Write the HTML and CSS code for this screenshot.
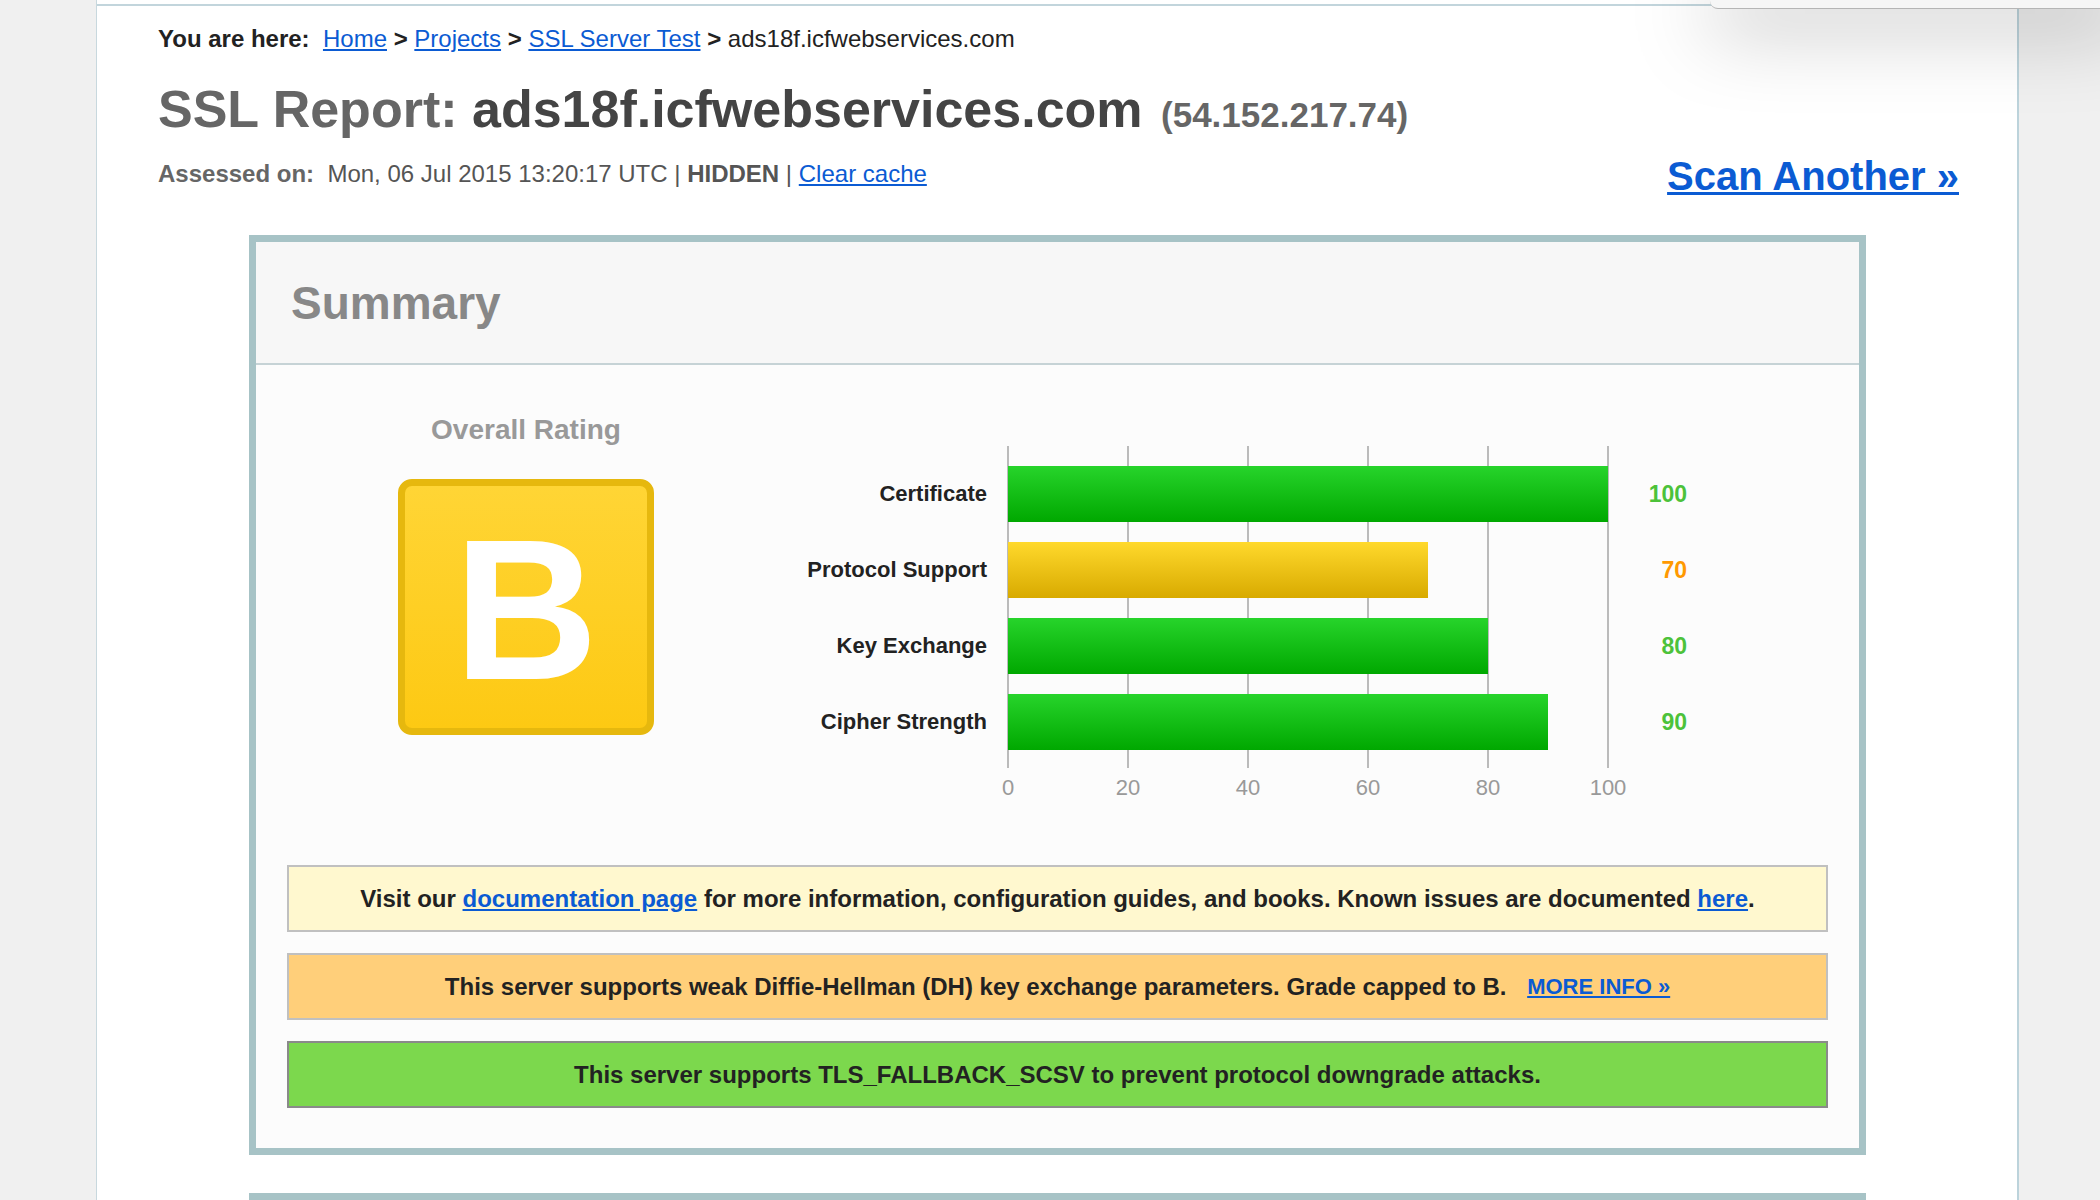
FILE: index.html
```html
<!DOCTYPE html>
<html>
<head>
<meta charset="utf-8">
<title>SSL Server Test: ads18f.icfwebservices.com</title>
<link rel="stylesheet" href="styles.css">
</head>
<body>
<div class="popup"></div>
<div class="page">
  <div class="inner">
    <div class="breadcrumb">
      <b>You are here:</b>&nbsp; <a href="#">Home</a> <b>&gt;</b> <a href="#">Projects</a> <b>&gt;</b> <a href="#">SSL Server Test</a> <b>&gt;</b> ads18f.icfwebservices.com
    </div>
    <h1 class="title"><span class="lead">SSL Report:</span> ads18f.icfwebservices.com <span class="ip">(54.152.217.74)</span></h1>
    <div class="meta-row">
      <div class="assessed"><b class="lbl">Assessed on:</b>&nbsp; Mon, 06 Jul 2015 13:20:17 UTC | <b>HIDDEN</b> | <a href="#">Clear cache</a></div>
      <a class="scan" href="#">Scan Another »</a>
    </div>

    <div class="report-box">
      <div class="box-head">Summary</div>
      <div class="box-body">
        <div class="summary-row">
          <div class="rating">
            <div class="rating-title">Overall Rating</div>
            <div class="grade"><span>B</span></div>
          </div>
          <div class="chart">
            <div class="labels">
              <div class="lab">Certificate</div>
              <div class="lab">Protocol Support</div>
              <div class="lab">Key Exchange</div>
              <div class="lab">Cipher Strength</div>
            </div>
            <div class="plot-col">
              <div class="plot">
                <div class="bar green" style="width:600px"></div>
                <div class="bar yellow" style="width:420px"></div>
                <div class="bar green" style="width:480px"></div>
                <div class="bar green" style="width:540px"></div>
              </div>
              <div class="axis">
                <span>0</span><span>20</span><span>40</span><span>60</span><span>80</span><span>100</span>
              </div>
            </div>
            <div class="values">
              <div class="val good">100</div>
              <div class="val warn">70</div>
              <div class="val good">80</div>
              <div class="val good">90</div>
            </div>
          </div>
        </div>

        <div class="notice info">Visit our&nbsp;<a href="#">documentation page</a>&nbsp;for more information, configuration guides, and books. Known issues are documented&nbsp;<a href="#">here</a>.</div>
        <div class="notice warning">This server supports weak Diffie-Hellman (DH) key exchange parameters. Grade capped to B. <a class="more" href="#">MORE INFO »</a></div>
        <div class="notice good-box">This server supports TLS_FALLBACK_SCSV to prevent protocol downgrade attacks.</div>
      </div>
    </div>

    <div class="report-box next"></div>
  </div>
</div>
</body>
</html>
```

FILE: styles.css
```css
html, body {
  margin: 0;
  padding: 0;
}
body {
  background: #f0f0f0;
  font-family: "Liberation Sans", Arial, Helvetica, sans-serif;
  color: #222;
  overflow: hidden;
  height: 1200px;
}
a {
  color: #0b5bd3;
  text-decoration: underline;
}
.popup {
  position: absolute;
  left: 1710px;
  top: -20px;
  width: 420px;
  height: 28px;
  background: #f6f6f6;
  border-bottom: 1px solid #b5b5b5;
  border-bottom-left-radius: 8px;
  box-shadow: 0 16px 80px rgba(0, 0, 0, 0.34);
  z-index: 5;
}
.page {
  margin-left: 96px;
  width: 1920px;
  background: #fff;
  border-left: 1px solid #c8d8de;
  border-right: 2px solid #bcd3db;
  padding-top: 4px;
  height: 1196px;
}
.inner {
  border-top: 2px solid #c2d5dc;
  padding: 0 58px 0 61px;
}
.breadcrumb {
  font-size: 24px;
  line-height: 26px;
  margin-top: 20px;
  color: #222;
}
.title {
  margin: 27px 0 0 0;
  font-size: 52px;
  line-height: 60px;
  font-weight: bold;
  color: #444;
}
.title .lead {
  color: #666;
}
.title .ip {
  font-size: 35px;
  line-height: 1;
  color: #666;
  margin-left: 4px;
}
.meta-row {
  display: flex;
  justify-content: space-between;
  align-items: flex-start;
  margin-top: 12px;
}
.assessed {
  font-size: 24px;
  line-height: 26px;
  color: #555;
  margin-top: 10px;
}
.assessed .lbl {
  color: #666;
}
.scan {
  font-size: 40px;
  line-height: 44px;
  font-weight: bold;
  color: #0b5bd3;
  text-decoration-thickness: 3px;
  margin-top: 3px;
}
.report-box {
  width: 1603px;
  margin: 37px auto 0 auto;
  border: 7px solid #a7c3c6;
  background: #fcfcfc;
  position: relative;
  left: -1px;
}
.box-head {
  height: 121px;
  background: #f7f7f7;
  border-bottom: 2px solid #c6d3d6;
  display: flex;
  align-items: center;
  padding-left: 35px;
  font-size: 46px;
  font-weight: bold;
  color: #888;
}
.box-body {
  padding: 46px 31px 40px 31px;
}
.summary-row {
  display: flex;
  align-items: flex-start;
}
.rating {
  width: 478px;
  display: flex;
  flex-direction: column;
  align-items: center;
}
.rating-title {
  font-size: 28px;
  line-height: 31px;
  font-weight: bold;
  color: #999;
  margin-top: 3px;
}
.grade {
  margin-top: 34px;
  width: 242px;
  height: 242px;
  border: 7px solid #e6b80e;
  border-radius: 14px;
  background: linear-gradient(#ffd535, #fdc913);
  display: flex;
  align-items: center;
  justify-content: center;
}
.grade span {
  font-size: 200px;
  line-height: 200px;
  font-weight: bold;
  color: #fff;
  margin-top: 6px;
}
.chart {
  display: flex;
  margin-top: 35px;
}
.labels, .values {
  padding-top: 20px;
  display: flex;
  flex-direction: column;
  gap: 20px;
}
.labels {
  width: 222px;
  margin-right: 21px;
}
.lab {
  height: 56px;
  display: flex;
  align-items: center;
  justify-content: flex-end;
  font-size: 22px;
  font-weight: bold;
  color: #222;
  white-space: nowrap;
}
.plot-col {
  width: 601px;
  flex: none;
}
.values {
  width: 78px;
}
.val {
  height: 56px;
  display: flex;
  align-items: center;
  justify-content: flex-end;
  font-size: 23px;
  font-weight: bold;
}
.val.good {
  color: #4cc23a;
}
.val.warn {
  color: #ff9900;
}
.plot {
  width: 602px;
  height: 302px;
  padding-top: 20px;
  margin-left: -1px;
  background-image: linear-gradient(to right, #bbbbbb 2px, transparent 2px);
  background-size: 120px 100%;
  display: flex;
  flex-direction: column;
  gap: 20px;
}
.bar {
  height: 56px;
  margin-left: 1px;
}
.bar.green {
  background: linear-gradient(#27d42b, #00a800);
}
.bar.yellow {
  background: linear-gradient(#ffd92c, #d8aa00);
}
.axis {
  margin-top: 7px;
  margin-left: -60px;
  width: 720px;
  display: grid;
  grid-template-columns: repeat(6, 120px);
  font-size: 22px;
  line-height: 26px;
  color: #999;
  text-align: center;
}
.notice {
  height: 63px;
  border: 2px solid #c0c0c0;
  display: flex;
  align-items: center;
  justify-content: center;
  font-size: 24px;
  font-weight: bold;
  color: #222;
  white-space: pre;
}
.notice + .notice {
  margin-top: 21px;
}
.summary-row + .notice {
  margin-top: 64px;
}
.notice.info {
  background: #fff8cf;
}
.notice.warning {
  background: #ffcf7a;
}
.notice.good-box {
  background: #7cd84d;
  border-color: #8a8a8a;
}
.notice .more {
  margin-left: 14px;
  font-size: 22px;
}
.report-box.next {
  margin-top: 38px;
  height: 60px;
  background: #f7f7f7;
}
```
